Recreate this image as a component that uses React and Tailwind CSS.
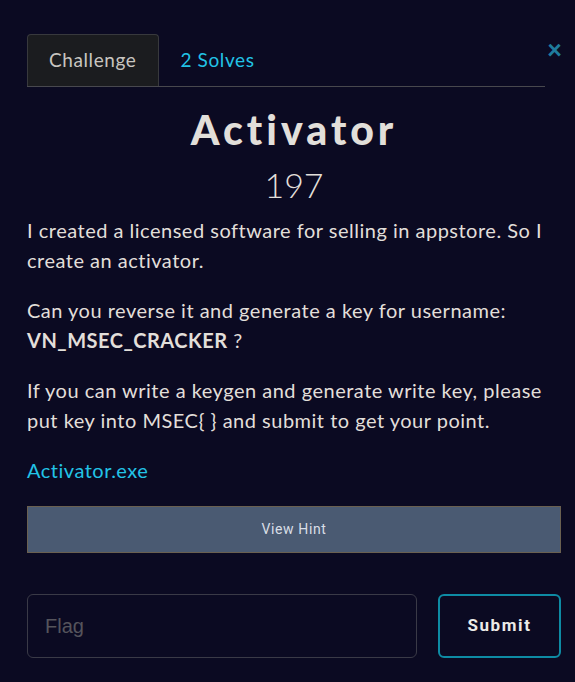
import React from 'react';

export default function App() {
  return (
    <div className="min-h-screen bg-[#0b0a22] text-[#e2dfda] font-['Lato',sans-serif]">
      <div className="pl-[27px] pr-[14px] pt-[34px] pb-[22px]">
        <div className="flex items-start">
          <div className="flex flex-1 border-b border-[#48484e]">
            <div className="h-[52px] px-[21px] flex items-center bg-[#1b1c1f] border border-b-0 border-[#38393d] rounded-t-[4px] text-[19px] tracking-[0.6px] text-[#c9c6c1]">
              Challenge
            </div>
            <div className="h-[52px] px-[22px] flex items-center text-[19px] tracking-[0.6px] text-[#22c3e6]">
              2 Solves
            </div>
          </div>
          <button className="ml-[2px] w-[14px] mt-[2px] text-[#1f7c9d] text-[26px] font-black leading-none">×</button>
        </div>

        <h1 className="mt-[22px] text-center text-[41px] font-black tracking-[4px] leading-none text-[#e2dfda]">
          Activator
        </h1>
        <div className="mt-[18px] text-center text-[34px] font-light leading-none">197</div>

        <div className="mt-[13px] text-[20px] leading-[30px] tracking-[0.5px] space-y-[20px]">
          <p>I created a licensed software for selling in appstore. So I create an activator.</p>
          <p>
            Can you reverse it and generate a key for username:
            <br />
            <b className="font-bold">VN_MSEC_CRACKER</b> ?
          </p>
          <p>{'If you can write a keygen and generate write key, please put key into MSEC{ } and submit to get your point.'}</p>
          <p>
            <a className="text-[#22c3e6]">Activator.exe</a>
          </p>
        </div>

        <button className="mt-[21px] w-full h-[47px] bg-[#4a5a72] border border-[#6a6050] text-[14px] text-[#d9dee6] tracking-[0.6px] font-['Roboto',sans-serif]">
          View Hint
        </button>

        <div className="mt-[41px] flex gap-[21px]">
          <input
            placeholder="Flag"
            className="flex-1 h-[64px] px-[17px] bg-transparent border border-[#3a3a47] rounded-[6px] text-[20px] placeholder-[#55545c] font-['Liberation_Sans',sans-serif]"
          />
          <button className="w-[123px] h-[64px] border-2 border-[#0e8ba4] rounded-[6px] text-[17px] font-bold tracking-[1.6px] text-[#ecebe8] font-['Roboto',sans-serif]">
            Submit
          </button>
        </div>
      </div>
    </div>
  );
}
